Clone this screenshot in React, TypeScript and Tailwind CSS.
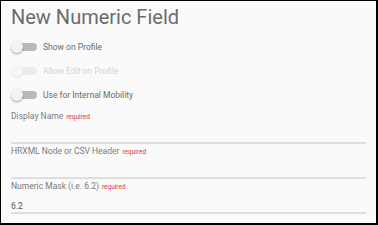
const Toggle = ({ label, disabled }: { label: string; disabled?: boolean }) => {
  return (
    <div className="flex items-center h-6 gap-[6px]">
      <div className="relative w-[26px] h-3">
        <div
          className={
            disabled
              ? "absolute left-[2px] top-[2px] w-6 h-2 rounded-full bg-[#ececec]"
              : "absolute left-[2px] top-[2px] w-6 h-2 rounded-full bg-[#b9b9b9]"
          }
        />
        <div
          className={
            disabled
              ? "absolute left-0 top-0 w-3 h-3 rounded-full bg-[#f6f6f6] shadow-[0_1px_2px_rgba(0,0,0,0.08)]"
              : "absolute left-0 top-0 w-3 h-3 rounded-full bg-[#f3f3f3] shadow-[0_1px_2px_rgba(0,0,0,0.35)]"
          }
        />
      </div>
      <span className={disabled ? "text-[8.5px] text-[#d4d4d4]" : "text-[8.5px] text-[#6b6b6b]"}>
        {label}
      </span>
    </div>
  );
};

const Field = ({ label, value }: { label: string; value?: string }) => {
  return (
    <div>
      <div className="h-[14px] leading-[14px] text-[8.5px] text-[#7a7a7a]">
        {label}
        <span className="ml-[3px] text-[6.5px] text-[#d9363e]">required</span>
      </div>
      <div className="h-[21px] flex items-end border-b-2 border-[#dedede] text-[8.5px] leading-3 text-[#555]">
        {value}
      </div>
    </div>
  );
};

export default function App() {
  return (
    <div
      className="w-[378px] h-[225px] bg-[#fafafa] border-t border-l border-r-2 border-b-2 border-black pl-[10px] pr-[10px] pt-1 overflow-hidden"
      style={{ fontFamily: "Roboto, 'Liberation Sans', sans-serif" }}
    >
      <h1 className="text-[20px] leading-6 text-[#6c6c6c]">New Numeric Field</h1>
      <div className="mt-[6px]">
        <Toggle label="Show on Profile" />
        <Toggle label="Allow Edit on Profile" disabled />
        <Toggle label="Use for Internal Mobility" />
      </div>
      <div className="mt-[2px]">
        <Field label="Display Name" />
        <Field label="HRXML Node or CSV Header" />
        <Field label="Numeric Mask (i.e. 6.2)" value="6.2" />
      </div>
    </div>
  );
}
